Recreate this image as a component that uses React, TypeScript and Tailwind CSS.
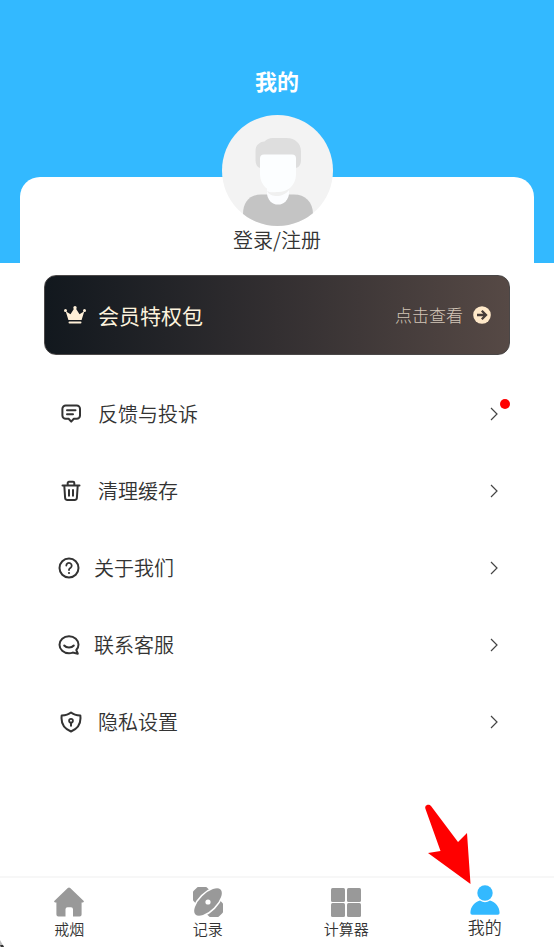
import { ReactNode } from "react";

const stroke = {
  fill: "none",
  stroke: "currentColor",
  strokeWidth: 2,
  strokeLinecap: "round",
  strokeLinejoin: "round",
} as const;

const MENU: { label: string; icon: ReactNode; wide?: boolean; dot?: boolean }[] = [
  {
    label: "反馈与投诉",
    dot: true,
    icon: (
      <svg viewBox="0 0 22 22" className="size-[22px]" {...stroke}>
        <path d="M5.700 2.500h11A3.300 3.300 0 0 1 20 5.800v6.700a3.300 3.300 0 0 1-3.300 3.300h-2.900l-2.600 2.800-2.600-2.800H5.700a3.300 3.300 0 0 1-3.300-3.300V5.800a3.300 3.300 0 0 1 3.300-3.300Z" />
        <path d="M7 7.200h8.500M7 11.200h6" />
      </svg>
    ),
  },
  {
    label: "清理缓存",
    icon: (
      <svg viewBox="0 0 22 22" className="size-[22px]" {...stroke}>
        <path d="M2.500 5.500h17M4.300 5.800l.8 12a2.300 2.300 0 0 0 2.300 2.200h7.200a2.300 2.300 0 0 0 2.300-2.200l.8-12M7.700 5.200V3a1.200 1.200 0 0 1 1.200-1.200h4.200A1.200 1.200 0 0 1 14.300 3v2.200" />
        <path d="M9 10v5.800M13 10v5.800" />
      </svg>
    ),
  },
  {
    label: "关于我们",
    wide: true,
    icon: (
      <svg viewBox="0 0 22 22" className="size-[22px]" {...stroke}>
        <circle cx="11" cy="11" r="9.500" />
        <path d="M8.300 8.600a2.700 2.700 0 1 1 4.300 2.200c-1 .7-1.600 1-1.600 1.900v.3" strokeWidth="1.800" />
        <circle cx="11" cy="16" r="1.100" fill="currentColor" stroke="none" />
      </svg>
    ),
  },
  {
    label: "联系客服",
    wide: true,
    icon: (
      <svg viewBox="0 0 22 22" className="size-[22px]" {...stroke}>
        <path d="M11 2.200c5.400 0 9.500 3.700 9.500 8.400 0 2.200-.8 4-2.200 5.400l1.500 3.700-5.100-1.100c-1.200.4-2.400.6-3.700.6-5.400 0-9.500-3.800-9.500-8.500S5.600 2.200 11 2.200Z" />
        <path d="M6.200 11.500c2.300 2.800 7.300 2.800 9.600 0" />
      </svg>
    ),
  },
  {
    label: "隐私设置",
    icon: (
      <svg viewBox="0 0 22 22" className="size-[22px]" {...stroke}>
        <path d="M11 1.500c2.300 1.900 5.500 2.800 9.300 3 .9 6.800-1 12.600-9.300 16C2.700 17.100.8 11.300 1.700 4.500c3.800-.2 7-1.100 9.300-3Z" />
        <circle cx="11" cy="9.700" r="1.900" strokeWidth="1.800" />
        <path d="M11 11.800v3" />
      </svg>
    ),
  },
];

const TABS: { label: string; icon: ReactNode; active?: boolean }[] = [
  {
    label: "戒烟",
    icon: (
      <svg viewBox="0 0 30 30" className="size-[30px]" fill="currentColor">
        <path d="M13.800 1a2 2 0 0 1 2.400 0l13.300 12.700c.8.8.4 1.700-.6 1.700h-1.300v12.100a2 2 0 0 1-2 2H19v-7.200a2 2 0 0 0-2-2h-3.500a2 2 0 0 0-2 2v7.200H4.400a2 2 0 0 1-2-2V15.400H1.100c-1 0-1.400-.9-.6-1.700Z" />
      </svg>
    ),
  },
  {
    label: "记录",
    icon: (
      <svg viewBox="0 0 30 30" className="size-[30px]" fill="currentColor">
        <rect x="-3" y="5.500" width="36" height="19" rx="8" transform="rotate(45 15 15)" />
        <ellipse
          cx="15"
          cy="15"
          rx="18.500"
          ry="9"
          transform="rotate(-45 15 15)"
          stroke="#fff"
          strokeWidth="1.500"
        />
        <circle cx="15" cy="15" r="2.600" fill="#fff" />
      </svg>
    ),
  },
  {
    label: "计算器",
    icon: (
      <svg viewBox="0 0 30 30" className="size-[30px]" fill="currentColor">
        <rect width="14" height="14" y="1" rx="1.500" />
        <rect x="16" y="1" width="14" height="14" rx="1.500" />
        <rect y="16" width="14" height="14" rx="1.500" />
        <rect x="16" y="16" width="14" height="14" rx="1.500" />
      </svg>
    ),
  },
  {
    label: "我的",
    active: true,
    icon: (
      <svg viewBox="0 0 30 30" className="size-[30px]" fill="currentColor">
        <circle cx="15" cy="8" r="7.700" />
        <path d="M10 15.500a8.500 8.500 0 0 0 10 0c5.500 1.500 9.500 6.200 9.600 12.500a1.800 1.800 0 0 1-1.800 1.800H2.200A1.800 1.800 0 0 1 .4 28C.5 21.700 4.500 17 10 15.500Z" />
      </svg>
    ),
  },
];

function Avatar() {
  return (
    <svg viewBox="0 0 111 111" className="size-[111px]">
      <defs>
        <clipPath id="avatar-clip">
          <circle cx="55.500" cy="55.500" r="55.500" />
        </clipPath>
      </defs>
      <g clipPath="url(#avatar-clip)">
        <rect width="111" height="111" fill="#f3f3f3" />
        <path d="M21 111V99c0-12 7-19.500 18-19.500h33c11 0 19 7.500 19 19.500v12Z" fill="#c4c4c4" />
        <path d="M45 70h22v8a11 11.500 0 0 1-22 0Z" fill="#fcfdff" />
        <path d="M45 76c5 3 15 1 22-6v5c-3 4-8 6-12 6-4 0-8-1-10-5Z" fill="#f0f0f0" />
        <path d="M38 53c-3-1-4.500-4-4.500-8V36c0-6 4-9 9-9.500 2-2 5-3.500 8-3.500h14c9 0 14.500 6 14.500 13v9c0 4-1.500 7-5 8Z" fill="#dedede" />
        <path d="M42 39.500h28a4 4 0 0 1 4 4V59c0 11-8 18-18 18s-18-7-18-18V43.500a4 4 0 0 1 4-4Z" fill="#fcfeff" />
      </g>
    </svg>
  );
}

function MemberBanner() {
  return (
    <a
      href="#member"
      className="flex h-20 items-center rounded-xl border border-[#4a4747] bg-linear-to-r from-[#12181e] via-[#332f31] to-[#564945] pr-[18px] pl-[19px]"
    >
      <svg viewBox="0 0 22 18" className="h-[18px] w-[22px]" fill="#fff0d8">
        <path d="M1.700 5.200 6.500 8.300l3.800-6h1.400l3.800 6 4.800-3.100L17.600 14H4.400Z" />
        <circle cx="1.500" cy="4.500" r="1.500" />
        <circle cx="11" cy="1.800" r="1.700" />
        <circle cx="20.500" cy="4.500" r="1.500" />
        <rect x="4.500" y="15.500" width="13" height="2" rx="1" />
      </svg>
      <span className="ml-3 text-[21px] leading-7 text-[#fdf3de]">会员特权包</span>
      <span className="ml-auto text-[17px] leading-6 font-light text-[#d3c6b8]">点击查看</span>
      <svg viewBox="0 0 18 18" className="ml-2.5 size-[18px]">
        <circle cx="9" cy="9" r="8.800" fill="#ffe9c9" />
        <path d="M4 9h8.500M8.800 4.800 13 9l-4.200 4.200" fill="none" stroke="#463c39" strokeWidth="2.300" />
      </svg>
    </a>
  );
}

export default function App() {
  return (
    <div className="relative flex min-h-screen flex-col overflow-hidden bg-white font-['Noto_Sans_CJK_SC',sans-serif] text-[#333]">
      <header className="bg-[#33b9ff] px-5 pt-16">
        <h1 className="text-center text-[22px] leading-8 font-bold text-white">我的</h1>
        <div className="mt-[81px] flex flex-col items-center rounded-t-[20px] bg-white pb-[9px]">
          <div className="-mt-[62px]">
            <Avatar />
          </div>
          <button className="text-xl leading-7 font-[350]">登录/注册</button>
        </div>
      </header>

      <main className="flex-1 px-11 pt-3">
        <MemberBanner />
        <ul className="mt-5">
          {MENU.map((item) => (
            <li key={item.label} className="relative">
              <button
                className={`flex h-[77px] w-full items-center pr-3 ${
                  item.wide ? "gap-3.5 pl-3.5" : "gap-4 pl-4"
                }`}
              >
                {item.icon}
                <span className="text-xl leading-7 font-[350]">{item.label}</span>
                <svg viewBox="0 0 8 14" className="ml-auto h-3.5 w-2" fill="none" stroke="#444">
                  <path d="M1 1l6 6-6 6" strokeWidth="1.200" />
                </svg>
              </button>
              {item.dot && (
                <span className="absolute top-6 right-0 size-2.5 rounded-full bg-[#ff0000]" />
              )}
            </li>
          ))}
        </ul>
      </main>

      <nav className="flex h-[71px] border-t-2 border-[#f7f7f7]">
        {TABS.map((tab) => (
          <a
            key={tab.label}
            href="#tab"
            className={`flex flex-1 flex-col items-center ${
              tab.active ? "pt-[7px] text-[#33b9ff]" : "pt-[9px] text-[#999]"
            }`}
          >
            {tab.icon}
            <span
              className={`font-[350] text-[#333] ${tab.active ? "text-[17px] leading-6" : "text-[15px] leading-6"}`}
            >
              {tab.label}
            </span>
          </a>
        ))}
      </nav>

      {/* pointer to the profile tab */}
      <svg viewBox="0 0 48 82" className="absolute right-[82px] bottom-[62px] h-[82px] w-12" fill="#ff0000">
        <path d="M1.500 6C0 2 5 .5 7 3l27 36 9-9 3.500 51L4 50l12.500-2Z" />
      </svg>
      <svg viewBox="0 0 6 7" className="absolute bottom-0 left-0 h-[7px] w-1.5">
        <path d="M0 0l4 7H0Z" fill="#bbb" />
        <path d="M0 5h3l1 2H1Z" fill="#333" />
      </svg>
    </div>
  );
}
